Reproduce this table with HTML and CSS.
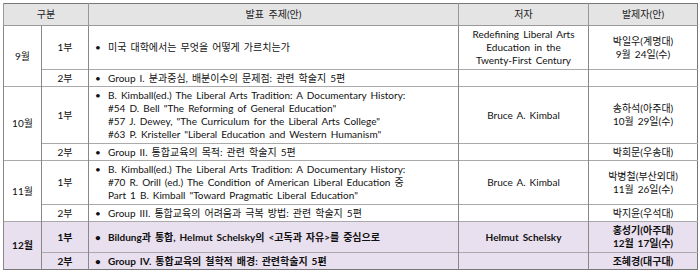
FILE: index.html
```html
<!DOCTYPE html>
<html lang="ko">
<head>
<meta charset="utf-8">
<link rel="stylesheet" href="styles.css">
</head>
<body>
<table class="sched">
  <colgroup>
    <col class="c-month"><col class="c-part"><col class="c-topic"><col class="c-author"><col class="c-pres">
  </colgroup>
  <thead>
    <tr>
      <th colspan="2">구분</th>
      <th>발표 주제(안)</th>
      <th>저자</th>
      <th>발제자(안)</th>
    </tr>
  </thead>
  <tbody>
    <tr class="r-tall">
      <td rowspan="2" class="month">9월</td>
      <td class="part">1부</td>
      <td class="topic"><div class="item"><span class="dot">•</span><div>미국 대학에서는 무엇을 어떻게 가르치는가</div></div></td>
      <td class="author">Redefining Liberal Arts<br>Education in the<br>Twenty-First Century</td>
      <td class="pres">박일우(계명대)<br>9월 24일(수)</td>
    </tr>
    <tr>
      <td class="part">2부</td>
      <td class="topic"><div class="item"><span class="dot">•</span><div>Group I. 분과중심, 배분이수의 문제점: 관련 학술지 5편</div></div></td>
      <td class="author"></td>
      <td class="pres"></td>
    </tr>
    <tr>
      <td rowspan="2" class="month">10월</td>
      <td class="part">1부</td>
      <td class="topic"><div class="item"><span class="dot">•</span><div>B. Kimball(ed.) The Liberal Arts Tradition: A Documentary History:<br>#54 D. Bell "The Reforming of General Education"<br>#57 J. Dewey, "The Curriculum for the Liberal Arts College"<br>#63 P. Kristeller "Liberal Education and Western Humanism"</div></div></td>
      <td class="author">Bruce A. Kimbal</td>
      <td class="pres">송하석(아주대)<br>10월 29일(수)</td>
    </tr>
    <tr>
      <td class="part">2부</td>
      <td class="topic"><div class="item"><span class="dot">•</span><div>Group II. 통합교육의 목적: 관련 학술지 5편</div></div></td>
      <td class="author"></td>
      <td class="pres">박희문(우송대)</td>
    </tr>
    <tr>
      <td rowspan="2" class="month">11월</td>
      <td class="part">1부</td>
      <td class="topic"><div class="item"><span class="dot">•</span><div>B. Kimball(ed.) The Liberal Arts Tradition: A Documentary History:<br>#70 R. Orill (ed.) The Condition of American Liberal Education 중<br>Part 1 B. Kimball "Toward Pragmatic Liberal Education"</div></div></td>
      <td class="author">Bruce A. Kimbal</td>
      <td class="pres">박병철(부산외대)<br>11월 26일(수)</td>
    </tr>
    <tr>
      <td class="part">2부</td>
      <td class="topic"><div class="item"><span class="dot">•</span><div>Group III. 통합교육의 어려움과 극복 방법: 관련 학술지 5편</div></div></td>
      <td class="author"></td>
      <td class="pres">박지윤(우석대)</td>
    </tr>
    <tr class="hl">
      <td rowspan="2" class="month">12월</td>
      <td class="part">1부</td>
      <td class="topic"><div class="item"><span class="dot">•</span><div>Bildung과 통합, Helmut Schelsky의 &lt;고독과 자유&gt;를 중심으로</div></div></td>
      <td class="author">Helmut Schelsky</td>
      <td class="pres">홍성기(아주대)<br>12월 17일(수)</td>
    </tr>
    <tr class="hl">
      <td class="part">2부</td>
      <td class="topic"><div class="item"><span class="dot">•</span><div>Group IV. 통합교육의 철학적 배경: 관련학술지 5편</div></div></td>
      <td class="author"></td>
      <td class="pres">조혜경(대구대)</td>
    </tr>
  </tbody>
</table>
</body>
</html>
```

FILE: styles.css
```css
html, body {
  margin: 0;
  background: #ffffff;
}
body {
  padding: 3px;
  font-family: Lato, "Noto Sans CJK KR", sans-serif;
  font-size: 10px;
  line-height: 13px;
  color: #111;
}
.sched {
  border-collapse: collapse;
  table-layout: fixed;
  width: 694px;
  border: 1px solid #777;
}
.c-month { width: 38px; }
.c-part { width: 47px; }
.c-topic { width: 370px; }
.c-author { width: 130px; }
.c-pres { width: 109px; }

.sched th {
  background: #e4e4e4;
  font-weight: normal;
  color: #222;
  height: 21px;
  padding: 0 4px;
  text-align: center;
  vertical-align: middle;
  border-left: 1px solid #999;
  border-bottom: 1px solid #999;
  word-spacing: 2px;
}
.sched td {
  padding: 2px 5px 1.5px;
  vertical-align: middle;
  border-left: 1px solid #888;
  border-top: 1px solid #aaa;
  word-spacing: 1.5px;
}
.month, .part, .author, .pres {
  text-align: center;
}
.topic {
  text-align: left;
}
.item {
  display: flex;
  padding-left: 1px;
}
.dot {
  flex: none;
  width: 13px;
}
.hl td {
  background: #e9e0ef;
  font-weight: bold;
}
```
